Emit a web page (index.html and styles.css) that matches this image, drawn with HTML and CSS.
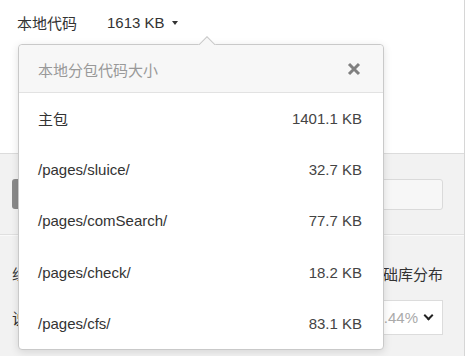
FILE: index.html
```html
<!DOCTYPE html>
<html>
<head>
<meta charset="utf-8">
<link rel="stylesheet" href="styles.css">
</head>
<body>
<div class="page">
  <div class="top">
    <span class="label">本地代码</span>
    <span class="size">1613 KB</span>
    <span class="caret"></span>
  </div>
  <div class="blank"></div>
  <div class="panel">
    <div class="section tools">
      <div class="btn"></div>
      <div class="field"></div>
    </div>
    <div class="section dist">
      <div class="line">
        <span class="txt">组件分布</span>
        <span class="txt">基础库分布</span>
      </div>
      <div class="line">
        <span class="txt">说明</span>
        <div class="select"><span class="pct">7.44%</span><span class="chev"></span></div>
      </div>
    </div>
  </div>

  <div class="popover">
    <div class="arrow"></div>
    <div class="pop-head">
      <span class="pop-title">本地分包代码大小</span>
      <span class="close">
        <svg width="14" height="14" viewBox="0 0 14 14"><path d="M2 2 L12 12 M12 2 L2 12" stroke="#808080" stroke-width="3" stroke-linecap="butt"/></svg>
      </span>
    </div>
    <div class="row"><span class="name">主包</span><span class="val">1401.1 KB</span></div>
    <div class="row"><span class="name">/pages/sluice/</span><span class="val">32.7 KB</span></div>
    <div class="row"><span class="name">/pages/comSearch/</span><span class="val">77.7 KB</span></div>
    <div class="row"><span class="name">/pages/check/</span><span class="val">18.2 KB</span></div>
    <div class="row"><span class="name">/pages/cfs/</span><span class="val">83.1 KB</span></div>
  </div>
</div>
</body>
</html>
```
FILE: styles.css
```css
html, body {
  margin: 0;
  padding: 0;
  background: #fff;
  font-family: "Liberation Sans", Arial, "Noto Sans CJK SC", sans-serif;
  font-size: 15px;
  color: #333;
}
.page {
  position: relative;
  width: 464px;
  height: 356px;
  border-right: 1px solid #d6d6d6;
  overflow: hidden;
}
.top {
  height: 44px;
  display: flex;
  align-items: center;
  padding-left: 17px;
}
.top .label { width: 90px; }
.top .size { margin-right: 7px; }
.caret {
  width: 0; height: 0;
  border-left: 3px solid transparent;
  border-right: 3px solid transparent;
  border-top: 4px solid #333;
  margin-top: 1px;
}
.blank { height: 109px; }
.panel {
  background: #f2f2f2;
  border-top: 1px solid #dcdcdc;
  height: 300px;
}
.section { padding: 0 21px 0 12px; }
.tools {
  height: 80px;
  display: flex;
  align-items: center;
  gap: 4px;
  border-bottom: 1px solid #e0e0e0;
  box-shadow: 0 1px 0 #fafafa;
}
.btn {
  width: 60px; height: 30px;
  background: #8a8a8a;
  border-radius: 3px;
}
.field {
  flex: 1;
  height: 29px;
  background: #f7f7f7;
  border: 1px solid #dadada;
  border-radius: 3px;
}
.dist { padding-top: 26px; }
.line {
  display: flex;
  justify-content: space-between;
  align-items: center;
  height: 24px;
}
.line + .line { height: 36px; margin-top: 14px; }
.txt { color: #333; }
.select {
  width: 84px; height: 35px;
  background: #fff;
  border: 1px solid #dcdcdc;
  display: flex; align-items: center; justify-content: flex-end;
  gap: 7px;
  padding: 0 10px 0 0;
  box-sizing: border-box;
}
.pct { color: #aaa; }
.chev {
  width: 5px; height: 5px;
  border-right: 2.5px solid #222;
  border-bottom: 2.5px solid #222;
  transform: rotate(45deg);
  margin-bottom: 4px;
}

.popover {
  position: absolute;
  left: 18px;
  top: 44px;
  width: 364px;
  height: 304px;
  background: #fff;
  border: 1px solid #c9c9c9;
  border-radius: 4px;
  box-shadow: 0 2px 8px rgba(0,0,0,0.12);
}
.arrow {
  position: absolute;
  left: 179px;
  top: -9px;
  width: 18px;
  height: 9px;
  overflow: hidden;
}
.arrow::before {
  content: "";
  position: absolute;
  left: 2px;
  top: 3px;
  width: 12px;
  height: 12px;
  background: #f7f7f7;
  border: 1px solid #c9c9c9;
  transform: rotate(45deg);
}
.pop-head {
  height: 47px;
  background: #f7f7f7;
  border-bottom: 1px solid #e2e2e2;
  border-radius: 4px 4px 0 0;
  display: flex;
  align-items: center;
  justify-content: space-between;
  padding: 0 22px 0 19px;
}
.pop-title { color: #999; margin-top: 1px; }
.close { display: flex; margin-top: 1px; }
.row {
  height: 51.2px;
  display: flex;
  align-items: center;
  justify-content: space-between;
  padding: 0 21px 0 19px;
}
.name { color: #333; }
.val { color: #444; }
```
